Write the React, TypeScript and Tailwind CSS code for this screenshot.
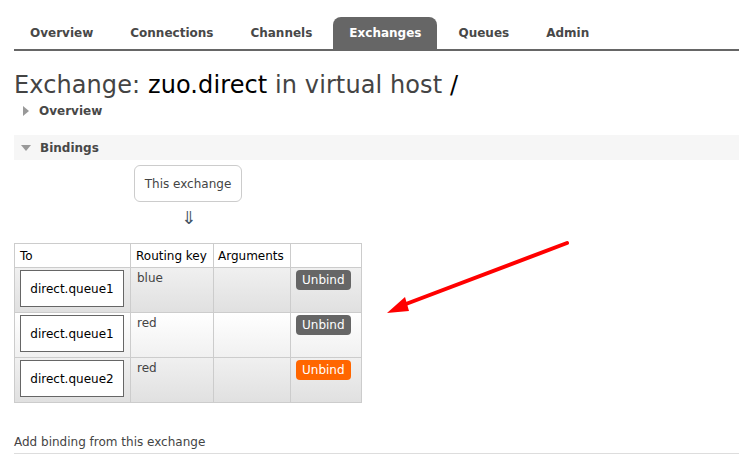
const font = { fontFamily: '"DejaVu Sans", Verdana, sans-serif' };

const tabs = ["Overview", "Connections", "Channels", "Exchanges", "Queues", "Admin"];

const bindings = [
  { to: "direct.queue1", key: "blue", row: "bg-gradient-to-b from-[#f0f0f0] to-[#e0e0e0]", hot: false },
  { to: "direct.queue1", key: "red", row: "bg-gradient-to-b from-[#ffffff] to-[#f0f0f0]", hot: false },
  { to: "direct.queue2", key: "red", row: "bg-gradient-to-b from-[#f0f0f0] to-[#e0e0e0]", hot: true },
];

function Triangle({ open }: { open: boolean }) {
  return open ? (
    <span className="inline-block w-0 h-0 border-l-[5px] border-r-[5px] border-t-[6px] border-l-transparent border-r-transparent border-t-[#999]" />
  ) : (
    <span className="inline-block w-0 h-0 border-t-[5px] border-b-[5px] border-l-[6px] border-t-transparent border-b-transparent border-l-[#999]" />
  );
}

export default function App() {
  return (
    <div className="relative w-[739px] h-[457px] bg-white overflow-hidden text-[12px] text-[#444]" style={font}>
      {/* Nav */}
      <div className="flex items-end ml-[14px] h-[51px] border-b-2 border-[#666]">
        {tabs.map(t => (
          <div
            key={t}
            className={
              "px-4 mr-[5px] h-[32px] flex items-center font-bold rounded-t-[8px] " +
              (t === "Exchanges" ? "bg-[#666] text-white" : "text-[#484848]")
            }
          >
            {t}
          </div>
        ))}
      </div>

      {/* Title */}
      <h1 className="ml-[14px] mt-[19px] text-[24px] leading-[30px] text-[#444] tracking-[0.1px]">
        Exchange: <span className="text-black">zuo.direct</span> in virtual host <span className="text-black">/</span>
      </h1>

      <div className="flex items-center ml-[23px] mt-[1px] h-[20px] gap-[10px] font-bold text-[#484848]">
        <Triangle open={false} />
        <span>Overview</span>
      </div>

      {/* Bindings */}
      <div className="mt-[14px] ml-[14px] h-[25px] bg-[#f6f6f6] flex items-center pl-[7px] gap-[9px] font-bold text-[#484848]">
        <Triangle open />
        <span>Bindings</span>
      </div>

      <div className="ml-[14px]">
        <div className="ml-[120px] mt-[5px] w-[108px] h-[37px] border border-[#ccc] rounded-[6px] flex items-center justify-center">
          This exchange
        </div>
        <div className="ml-[167px] mt-[6px] h-[20px] text-[18px] leading-[20px] text-[#445566]">⇓</div>

        <table className="mt-[15px] border-collapse border border-[#ccc]">
          <thead>
            <tr className="h-[24px] bg-white">
              <th className="w-[116px] border border-[#ccc] text-left font-normal text-black pl-[5px]">To</th>
              <th className="w-[83px] border border-[#ccc] text-left font-normal text-black pl-[5px]">Routing key</th>
              <th className="w-[77px] border border-[#ccc] text-left font-normal text-black pl-[4px]">Arguments</th>
              <th className="w-[71px] border border-[#ccc]"></th>
            </tr>
          </thead>
          <tbody>
            {bindings.map((b, i) => (
              <tr key={i} className={"h-[45px] " + b.row}>
                <td className="border border-[#ccc] align-top pt-[2px] px-[5px]">
                  <div className="w-[104px] h-[37px] border border-[#666] bg-white flex items-center justify-center text-black">
                    {b.to}
                  </div>
                </td>
                <td className="border border-[#ccc] align-top pt-[1px] pl-[6px] text-[#444]">{b.key}</td>
                <td className="border border-[#ccc]"></td>
                <td className="border border-[#ccc] align-top pt-[2px] pl-[5px]">
                  <span
                    className={
                      "inline-block px-[6px] h-[20px] leading-[20px] rounded-[4px] text-white " +
                      (b.hot ? "bg-[#ff6600]" : "bg-[#666]")
                    }
                  >
                    Unbind
                  </span>
                </td>
              </tr>
            ))}
          </tbody>
        </table>

        <div className="mt-[30px] pb-[2px] border-b border-[#ddd] text-[#444]">Add binding from this exchange</div>
      </div>

      {/* Red annotation arrow */}
      <svg className="absolute left-0 top-0 pointer-events-none" width="739" height="457">
        <line x1="567" y1="243" x2="398" y2="307" stroke="#ff0000" strokeWidth="4" strokeLinecap="round" />
        <polygon points="387,313 405,297 409,311" fill="#ff0000" />
      </svg>
    </div>
  );
}
